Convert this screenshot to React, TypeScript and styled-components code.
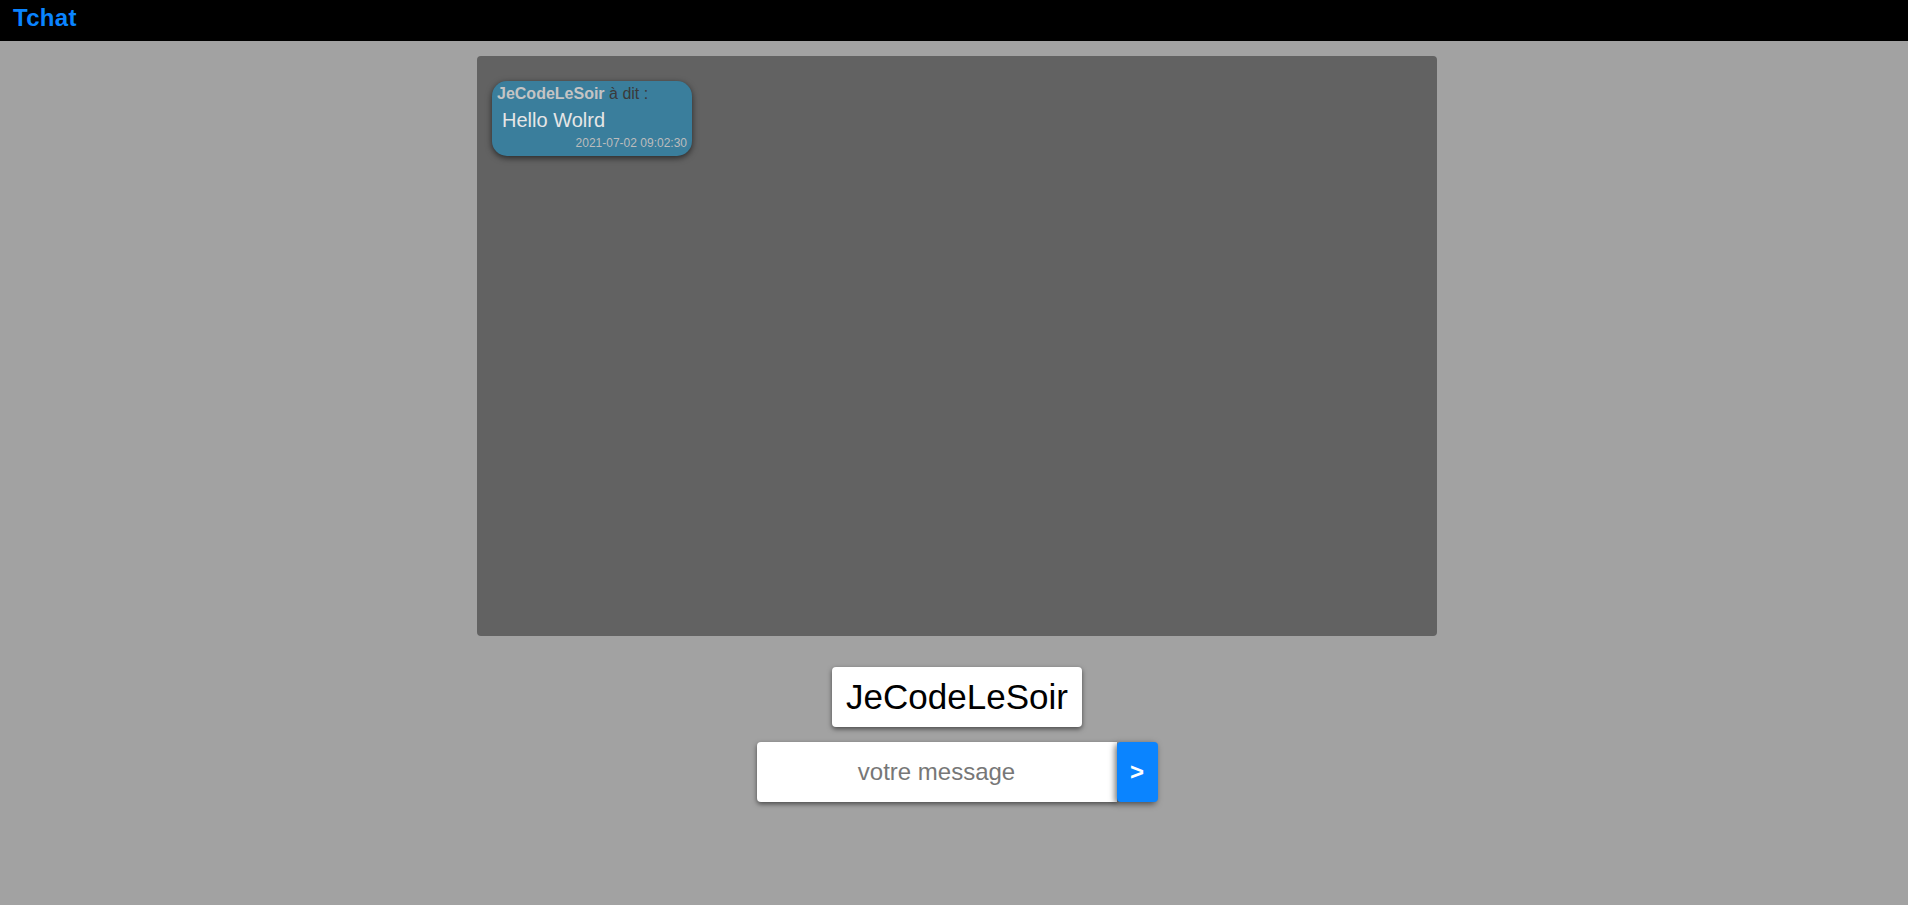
import React from "react";
import styled, { createGlobalStyle } from "styled-components";

const Global = createGlobalStyle`
  html, body { margin: 0; padding: 0; }
  body {
    background: #a2a2a2;
    font-family: "Liberation Sans", Arial, sans-serif;
    min-height: 905px;
  }
  * { box-sizing: border-box; }
`;

const Header = styled.header`
  height: 41px;
  background: #000;
  padding: 4px 13px 0;
`;

const Brand = styled.span`
  color: #0a84ff;
  font-weight: bold;
  font-size: 24px;
  line-height: 27px;
  letter-spacing: 0.3px;
`;

const Main = styled.main`
  display: flex;
  flex-direction: column;
  align-items: center;
  padding: 15px 0 0 6px;
`;

const ChatPanel = styled.section`
  width: 960px;
  height: 580px;
  background: #626262;
  border-radius: 4px;
  padding: 25px 15px;
  display: flex;
  flex-direction: column;
  align-items: flex-start;
  gap: 10px;
`;

const Bubble = styled.div`
  width: 200px;
  background: #3a7e9c;
  border-radius: 15px;
  padding: 4px 5px 6px;
  box-shadow: 0 2px 6px rgba(0, 0, 0, 0.6);
  display: flex;
  flex-direction: column;
`;

const Author = styled.div`
  font-size: 16px;
  line-height: 18px;
  color: #3a3a3a;
`;

const AuthorName = styled.b`
  color: #c4c4c4;
`;

const Body = styled.div`
  font-size: 20px;
  line-height: 23px;
  color: #e6e6e6;
  margin: 6px 0 0 5px;
`;

const Stamp = styled.div`
  font-size: 12px;
  line-height: 14px;
  color: #bcbcbc;
  text-align: right;
  margin-top: 4px;
`;

const NameField = styled.input`
  margin-top: 31px;
  width: 250px;
  height: 60px;
  border: none;
  outline: none;
  border-radius: 4px;
  background: #fff;
  box-shadow: 0 2px 5px rgba(0, 0, 0, 0.55);
  font-family: "Liberation Sans", Arial, sans-serif;
  font-size: 35px;
  color: #000;
  text-align: center;
  padding: 0;
`;

const SendRow = styled.form`
  margin-top: 15px;
  display: flex;
  height: 60px;
`;

const MessageField = styled.input`
  width: 360px;
  height: 60px;
  border: none;
  outline: none;
  border-radius: 4px 0 0 4px;
  background: #fff;
  box-shadow: 0 2px 5px rgba(0, 0, 0, 0.55);
  font-family: "Liberation Sans", Arial, sans-serif;
  font-size: 24px;
  text-align: center;
  padding: 0;
  &::placeholder { color: #777; }
`;

const SendButton = styled.button`
  position: relative;
  width: 41px;
  height: 60px;
  border: none;
  border-radius: 4px;
  background: #0a84ff;
  color: #fff;
  font-family: "Liberation Sans", Arial, sans-serif;
  font-weight: bold;
  font-size: 24px;
  padding: 0;
  box-shadow: -2px 2px 6px rgba(0, 0, 0, 0.55);
  cursor: pointer;
`;

export default function App() {
  return (
    <>
      <Global />
      <Header>
        <Brand>Tchat</Brand>
      </Header>
      <Main>
        <ChatPanel>
          <Bubble>
            <Author>
              <AuthorName>JeCodeLeSoir</AuthorName> à dit :
            </Author>
            <Body>Hello Wolrd</Body>
            <Stamp>2021-07-02 09:02:30</Stamp>
          </Bubble>
        </ChatPanel>
        <NameField defaultValue="JeCodeLeSoir" />
        <SendRow onSubmit={(e) => e.preventDefault()}>
          <MessageField placeholder="votre message" />
          <SendButton type="submit">&gt;</SendButton>
        </SendRow>
      </Main>
    </>
  );
}
